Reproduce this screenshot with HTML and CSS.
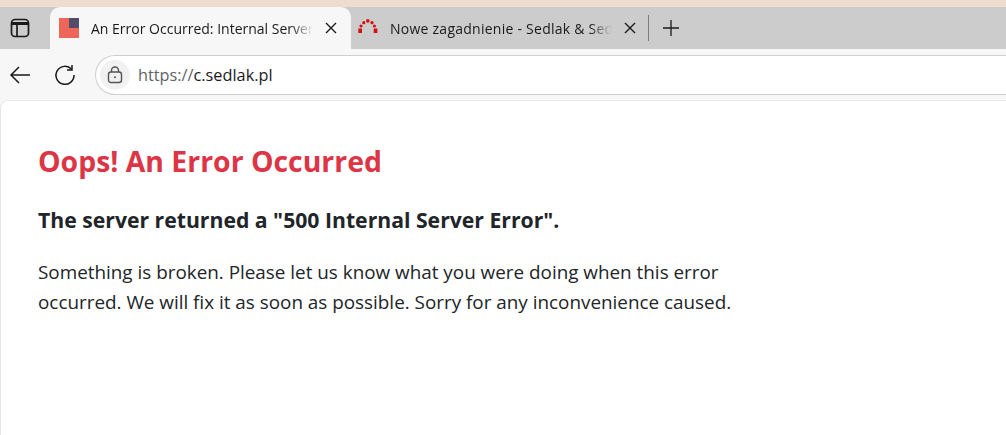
FILE: index.html
```html
<!DOCTYPE html>
<html>
<head>
    <meta charset="utf-8">
    <title>An Error Occurred: Internal Server Error</title>
    <link rel="stylesheet" href="styles.css">
</head>
<body>

<div class="desktop-strip"></div>

<div class="tab-strip">
    <div class="tab-actions">
        <svg class="icon" width="20" height="20" viewBox="0 0 20 20" fill="none" stroke="#1a1a1a" stroke-width="1.7">
            <rect x="1.5" y="1.5" width="17" height="17" rx="3.5"/>
            <path d="M2 5.5h16" stroke-width="3"/>
            <path d="M7 6v12"/>
        </svg>
    </div>
    <div class="tab tab-active">
        <svg class="favicon" width="20" height="20" viewBox="0 0 20 20">
            <rect width="20" height="20" fill="#ee665a"/>
            <rect x="10" width="10" height="10" fill="#514c6c"/>
        </svg>
        <span class="tab-title">An Error Occurred: Internal Server</span>
        <svg class="tab-close" width="12" height="12" viewBox="0 0 12 12" stroke="#1a1a1a" stroke-width="1.4">
            <path d="M1 1l10 10M11 1L1 11"/>
        </svg>
    </div>
    <div class="tab tab-inactive">
        <svg class="favicon" width="20" height="20" viewBox="0 0 20 20" fill="#d80f12">
            <rect x="0.3" y="10.5" width="3.7" height="4.5"/>
            <rect x="15.7" y="10.5" width="3.7" height="4.5"/>
            <circle cx="3" cy="8" r="1.6"/>
            <circle cx="5.8" cy="4.7" r="1.6"/>
            <circle cx="9.8" cy="2.9" r="1.8"/>
            <circle cx="14" cy="4.7" r="1.6"/>
            <circle cx="16.4" cy="8" r="1.6"/>
        </svg>
        <span class="tab-title">Nowe zagadnienie - Sedlak &amp; Sed</span>
        <svg class="tab-close" width="12" height="12" viewBox="0 0 12 12" stroke="#1a1a1a" stroke-width="1.4">
            <path d="M1 1l10 10M11 1L1 11"/>
        </svg>
    </div>
    <div class="tab-divider"></div>
    <svg class="new-tab" width="18" height="18" viewBox="0 0 18 18" stroke="#1a1a1a" stroke-width="1.3">
        <path d="M9 1v16M1 9h16"/>
    </svg>
</div>

<div class="toolbar">
    <svg class="nav-back" width="22" height="20" viewBox="0 0 22 20" fill="none" stroke="#1a1a1a" stroke-width="1.5">
        <path d="M21 10H2M10 2l-8 8 8 8"/>
    </svg>
    <svg class="nav-reload" width="22" height="22" viewBox="0 0 22 22" fill="none" stroke="#1a1a1a" stroke-width="1.5">
        <path d="M17.6 5.2A9 9 0 1 0 20 11"/>
        <path d="M18 1v5h-5"/>
    </svg>
    <div class="address-bar">
        <div class="site-info">
            <svg width="16" height="18" viewBox="0 0 16 18" fill="none" stroke="#555" stroke-width="1.4">
                <rect x="1.5" y="6" width="13" height="10.5" rx="2.5"/>
                <path d="M4.5 6V4.5a3.5 3.5 0 0 1 7 0V6"/>
                <circle cx="8" cy="11.2" r="1" fill="#555" stroke="none"/>
            </svg>
        </div>
        <span class="url"><span class="url-scheme">https://</span>c.sedlak.pl</span>
    </div>
</div>

<div class="page">
    <h1 class="error-title">Oops! An Error Occurred</h1>
    <h2 class="error-status">The server returned a "500 Internal Server Error".</h2>
    <p class="error-text">Something is broken. Please let us know what you were doing when this error occurred. We will fix it as soon as possible. Sorry for any inconvenience caused.</p>
</div>

</body>
</html>
```

FILE: styles.css
```css
html, body {
    height: 100%;
}

body {
    margin: 0;
    display: flex;
    flex-direction: column;
    overflow: hidden;
    background-color: #f7f7f7;
    font-family: "Open Sans", "Noto Sans", sans-serif;
    color: #212529;
}

.desktop-strip {
    height: 7px;
    flex: none;
    background-color: #efdcd0;
}

.tab-strip {
    height: 42px;
    flex: none;
    display: flex;
    align-items: center;
    background-color: #cccccc;
}

.tab-actions {
    width: 50px;
    flex: none;
    display: flex;
    justify-content: center;
    padding-right: 10px;
    box-sizing: border-box;
}

.icon {
    display: block;
}

.tab {
    height: 42px;
    flex: none;
    display: flex;
    align-items: center;
    box-sizing: border-box;
    font-size: 14px;
    color: #1a1a1a;
}

.tab-active {
    width: 301px;
    padding: 0 14px 0 9px;
    background-color: #f7f7f7;
    border-radius: 10px 10px 0 0;
}

.tab-inactive {
    width: 295px;
    padding: 0 10px 0 7px;
    letter-spacing: 0.25px;
}

.favicon {
    flex: none;
    margin-right: 12px;
}

.tab-title {
    flex: 1;
    min-width: 0;
    white-space: nowrap;
    -webkit-mask-image: linear-gradient(to right, #000 90%, transparent);
    mask-image: linear-gradient(to right, #000 90%, transparent);
}

.tab-close {
    flex: none;
    margin-left: 12px;
}

.tab-divider {
    width: 1px;
    height: 26px;
    flex: none;
    margin-left: 2px;
    background-color: #7d7d7d;
}

.new-tab {
    flex: none;
    margin-left: 13px;
}

.toolbar {
    height: 51px;
    flex: none;
    display: flex;
    align-items: center;
    box-sizing: border-box;
    padding: 0 10px 0 9px;
}

.nav-back {
    flex: none;
}

.nav-reload {
    flex: none;
    margin-left: 23px;
}

.address-bar {
    flex: none;
    width: 920px;
    height: 40px;
    margin-left: 19px;
    display: flex;
    align-items: center;
    box-sizing: border-box;
    padding-left: 4px;
    background-color: #fff;
    border: 1px solid #cfcfcf;
    border-right: 0;
    border-radius: 20px 0 0 20px;
}

.site-info {
    width: 30px;
    height: 30px;
    flex: none;
    display: flex;
    align-items: center;
    justify-content: center;
    border-radius: 50%;
    background-color: #f1f1f1;
}

.url {
    margin-left: 8px;
    font-size: 16.3px;
    color: #1a1a1a;
}

.url-scheme {
    color: #5f6368;
}

.page {
    flex: 1;
    box-sizing: border-box;
    padding: 43px 37px 0;
    background-color: #fff;
    border-left: 1px solid #e6e6e6;
    border-top: 1px solid #ececec;
    border-radius: 8px 0 0 0;
}

.error-title {
    margin: 0 0 29px;
    font-size: 28.4px;
    line-height: 34px;
    font-weight: 700;
    color: #dc3545;
}

.error-status {
    margin: 0 0 24px;
    font-size: 21.2px;
    line-height: 26px;
    font-weight: 700;
    color: #212529;
}

.error-text {
    width: 720px;
    margin: 0;
    font-size: 18.88px;
    line-height: 30px;
    color: #212529;
}
```
